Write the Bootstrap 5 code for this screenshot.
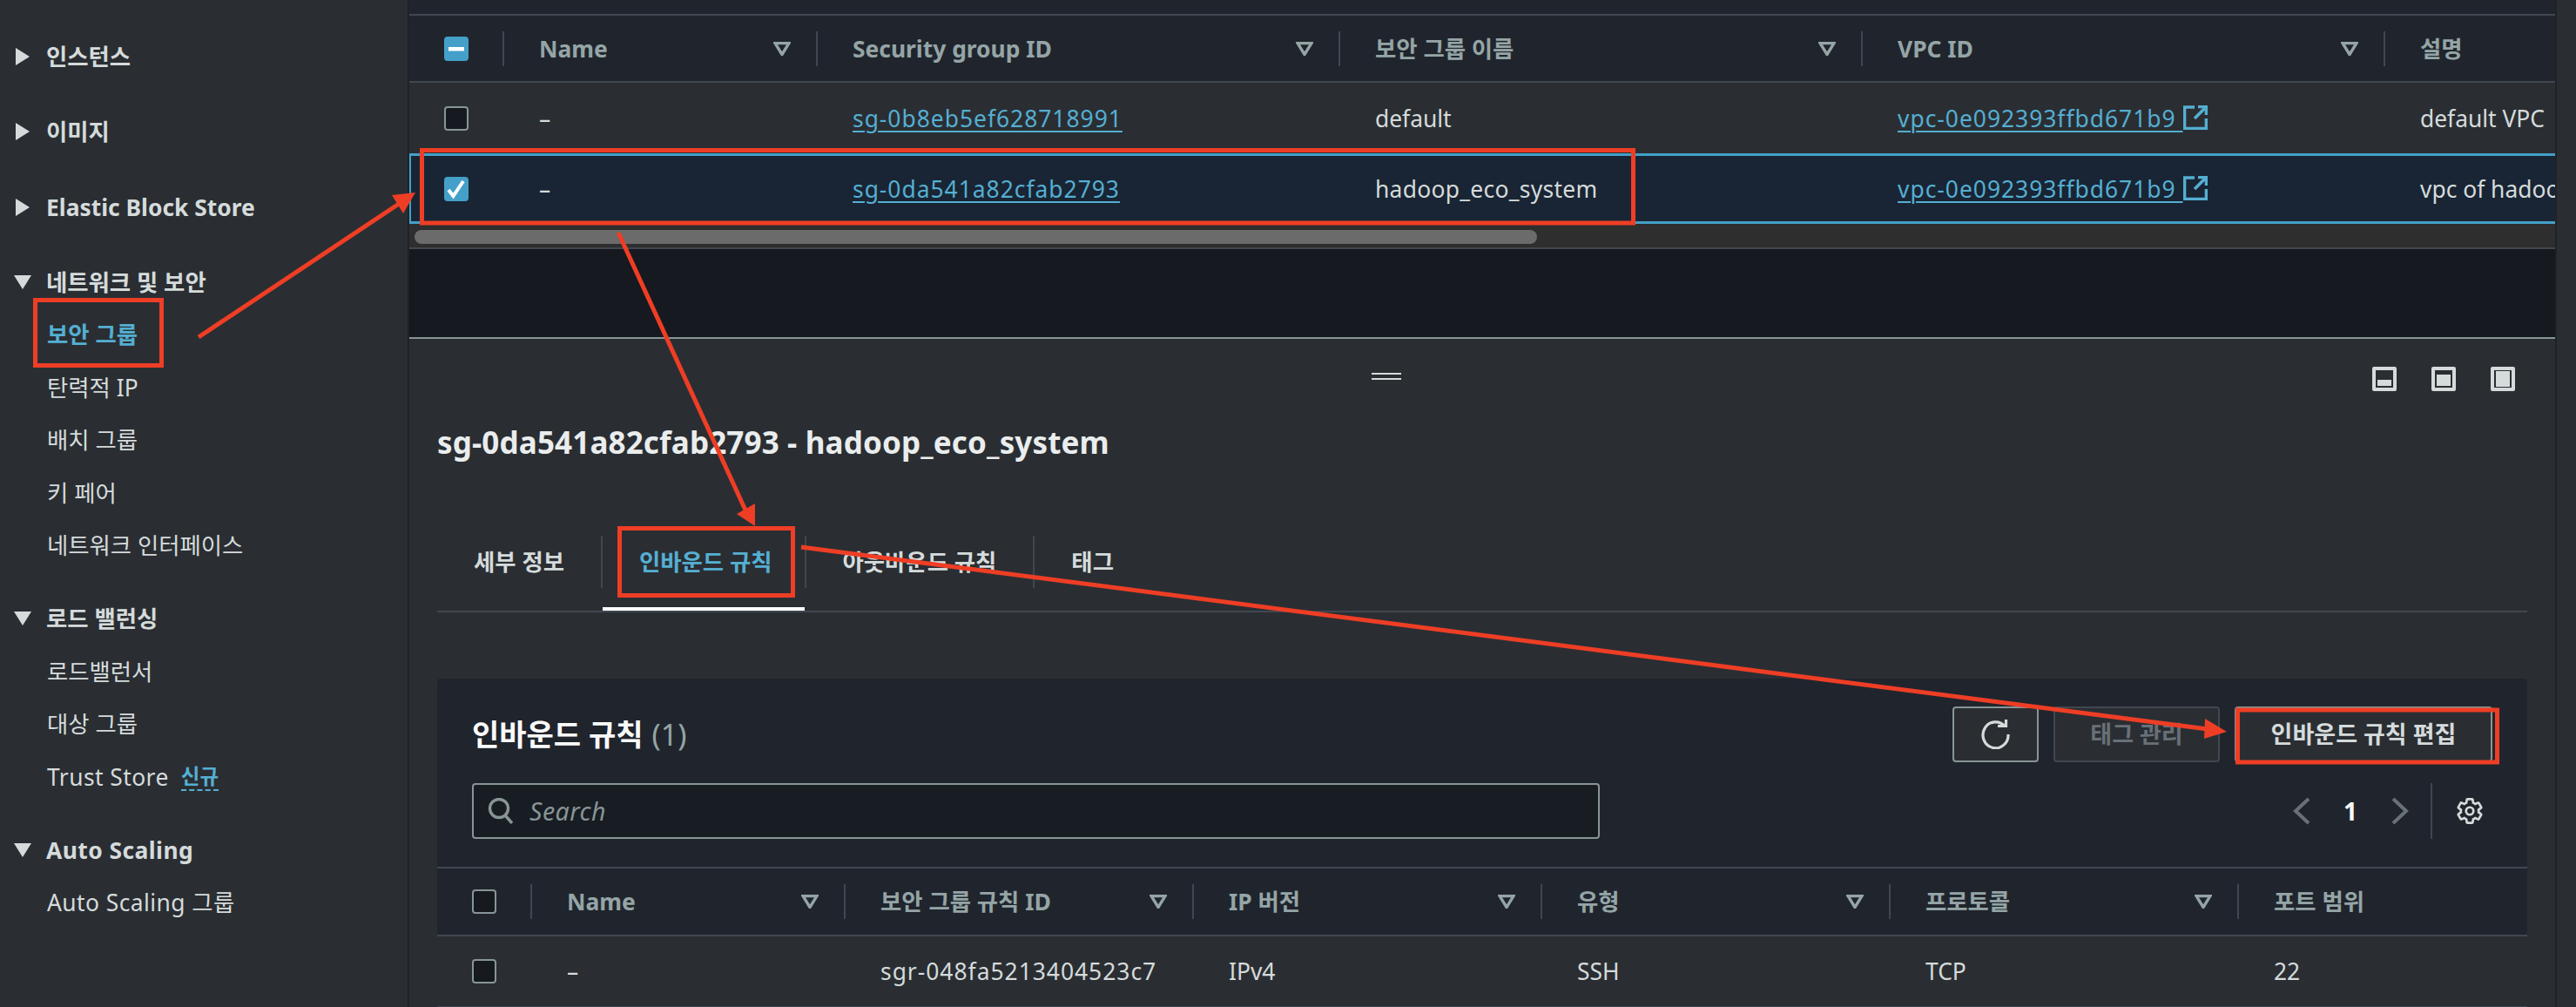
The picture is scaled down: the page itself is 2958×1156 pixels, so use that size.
<!DOCTYPE html>
<html lang="ko">
<head>
<meta charset="UTF-8">
<title>보안 그룹</title>
<link rel="stylesheet" href="https://cdn.jsdelivr.net/npm/bootstrap@5.3.3/dist/css/bootstrap.min.css">
<style>
  body { width: 2958px; height: 1156px; overflow: hidden; background: #2a2e33; color: #d5dbdb;
    font-family: "Noto Sans", "Noto Sans CJK KR", sans-serif; font-size: 26.4px; line-height: 36px; }

  /* left nav */
  .side-nav { width: 470px; height: 1156px; flex: none; padding-top: 35px; border-right: 2px solid #1f2329; }
  .side-head { height: 60px; margin-bottom: 26.3px; padding-left: 16px; font-weight: 700; }
  .side-head.is-open { margin-bottom: 0; }
  .side-head svg { width: 20px; height: 20px; flex: none; margin-right: 17px; fill: #d5dbdb; }
  .side-group { margin-bottom: 24px; }
  .side-item { height: 60.5px; padding-left: 54px; }
  .side-item.is-current { color: #55afd2; font-weight: 700; }
  .wide-latin { letter-spacing: .45px; }
  .new-tag { margin-left: 14px; color: #55afd2; font-size: 23.5px; font-weight: 700; line-height: 30px; letter-spacing: 0; border-bottom: 2px dashed #55afd2; }

  /* main */
  .main-col { width: 2464px; flex: none; }
  .tools-strip { flex: 1; border-left: 2px solid #1f2329; }
  .top-strip { height: 16px; background: #20252d; }

  .aws-tbl-wrap { overflow: hidden; }
  table.aws-tbl { table-layout: fixed; border-collapse: separate; border-spacing: 0; margin: 0; color: #d5dbdb; }
  table.aws-tbl th { height: 79px; padding: 0; background: #20252d; color: #95a5a6; font-weight: 700;
    border-top: 2px solid #414750; border-bottom: 2px solid #414750; vertical-align: middle; }
  table.aws-tbl td { height: 81px; padding: 0 0 0 42px; background: #2a2e33; color: #d5dbdb; border: 0; vertical-align: middle; white-space: nowrap; overflow: hidden; }
  table.aws-tbl td.chk-cell { padding-left: 40px; }
  table.aws-tbl th.chk-cell { padding-left: 40px; }
  table.aws-tbl tr.is-picked td { background: #192534; border-top: 3px solid #44a0c8; border-bottom: 3px solid #44a0c8; }
  table.aws-tbl tr.is-picked td:first-child { border-left: 2px solid #44a0c8; padding-left: 38px; }
  table.rules-tbl th { height: 80px; }
  table.rules-tbl td { height: 82px; border-bottom: 2px solid #414750; }
  .th-in { height: 40px; padding: 0 29px 0 40px; border-left: 2px solid #414750; }
  .th-in svg { width: 20px; height: 16px; fill: none; stroke: #95a5a6; stroke-width: 3.4; }
  .id-text { letter-spacing: 1px; }
  .name-text { letter-spacing: .3px; }
  .cell-link { color: #55afd2; text-decoration: underline; text-decoration-thickness: 2px; text-underline-offset: 4px; }
  .ext-icon { width: 28px; height: 28px; margin-left: 1px; vertical-align: -3px; fill: none; stroke: #55afd2; stroke-width: 3.6; }

  .chk-box { display: block; width: 28px; height: 28px; border-radius: 4px; background: #16191f; border: 2px solid #879596; }
  .chk-box.is-on { background: #44a0c8; border-color: #44a0c8; }
  .chk-box svg { display: block; width: 24px; height: 24px; }

  .scroll-track { height: 27px; padding: 7px 0 4px 6px; background: #2e2e2e; }
  .scroll-thumb { width: 1289px; height: 16px; border-radius: 8px; background: #6b6b6b; }
  .hr-line { height: 2px; background: #414750; }
  .dark-band { height: 101px; background: #16191f; }

  /* split panel */
  .split-panel { padding: 32px 32px 0; border-top: 2px solid #879596; position: relative; }
  .drag-bar { position: absolute; top: 39px; left: 1105px; width: 34px; height: 8px; border-top: 2px solid #d5dbdb; border-bottom: 2px solid #d5dbdb; }
  .panel-icons { height: 28px; gap: 40px; padding-right: 14px; }
  .panel-icons svg { width: 28px; height: 28px; fill: #d5dbdb; }
  .panel-title { margin: 37px 0 0; font-size: 35px; line-height: 44px; font-weight: 700; letter-spacing: .15px; color: #eaeded; }

  .tab-row { margin-top: 70px; height: 103px; border-bottom: 2px solid #414750; flex-wrap: nowrap; }
  .tab-row .nav-link { height: 101px; padding: 15px 42px 0 42px; color: #d5dbdb; font-weight: 700; line-height: 60px; margin-right: 0; }
  .tab-row .is-active .nav-link { padding-right: 37px; color: #55afd2; border-bottom: 4px solid #fff; }
  .tab-sep { width: 2px; height: 60px; margin-top: 15px; background: #414750; }

  /* rules card */
  .rules-box { margin-top: 76px; height: 400px; background: #20252d; border-radius: 4px 4px 0 0; }
  .rules-top { padding: 32px 40px; }
  .rules-title { margin: 0; font-size: 34px; line-height: 64px; font-weight: 700; color: #fafafa; }
  .rules-title span { margin-left: 10px; color: #95a5a6; font-weight: 400; }
  .btn-aws { width: 296px; height: 64px; padding: 0; background: #2a2e33; border: 2px solid #879596; border-radius: 4px; color: #d5dbdb; font-size: 27px; font-weight: 700; }
  .btn-aws.btn-square { width: 99px; }
  .btn-aws:disabled { opacity: 1; background: #2a2e33; border-color: #414750; color: #687078; width: 191px; }
  .rules-btns { gap: 17px; }
  .search-box { width: 1295px; height: 64px; margin-top: 24px; padding-left: 16px; background: #181c23; border: 2px solid #879596; border-radius: 4px; color: #879596; font-size: 28.5px; font-style: italic; letter-spacing: .5px; }
  .search-box svg { width: 30px; height: 30px; margin-right: 18px; fill: none; stroke: #879596; stroke-width: 3.4; }
  .pager { margin-top: 24px; height: 64px; }
  .pager-num { margin: 0 39px 0 38px; color: #fafafa; font-size: 28px; font-weight: 700; }
  .pager svg.chev { width: 20px; height: 32px; fill: none; stroke: #687078; stroke-width: 4; }
  .pager-sep { width: 2px; height: 64px; margin: 0 26px 0 25px; background: #414750; }
  .gear-icon { width: 34px; height: 34px; margin-right: 9px; fill: none; stroke: #d5dbdb; stroke-width: 1.9; }

  /* screenshot markup on top of everything */
  .markup { position: absolute; top: 0; left: 0; pointer-events: none; }
</style>
</head>
<body class="d-flex">

<svg width="0" height="0" class="d-block position-absolute">
  <symbol id="tri-open" viewBox="0 0 20 16"><polygon points="2,1.6 18,1.6 10,14.5"/></symbol>
  <symbol id="ext" viewBox="0 0 28 28"><path d="M13 2H1.5v24.5h25V15M17 1.5h9.5V11M26 2 13 15"/></symbol>
  <symbol id="minus" viewBox="0 0 24 24"><rect x="3" y="10" width="18" height="4.5" fill="#fff"/></symbol>
  <symbol id="tick" viewBox="0 0 24 24"><path d="M3 13l5.5 7L20 3" fill="none" stroke="#fff" stroke-width="4"/></symbol>
  <symbol id="right" viewBox="0 0 20 20"><polygon points="2,0 18,10 2,20"/></symbol>
  <symbol id="down" viewBox="0 0 20 20"><polygon points="0,2 20,2 10,18"/></symbol>
</svg>

<!-- left nav -->
<nav class="side-nav">
  <div class="side-head d-flex align-items-center"><svg><use href="#right"/></svg>인스턴스</div>
  <div class="side-head d-flex align-items-center"><svg><use href="#right"/></svg>이미지</div>
  <div class="side-head d-flex align-items-center"><svg><use href="#right"/></svg>Elastic Block Store</div>

  <div class="side-group">
    <div class="side-head is-open d-flex align-items-center"><svg><use href="#down"/></svg>네트워크 및 보안</div>
    <div class="side-item is-current d-flex align-items-center">보안 그룹</div>
    <div class="side-item d-flex align-items-center">탄력적 IP</div>
    <div class="side-item d-flex align-items-center">배치 그룹</div>
    <div class="side-item d-flex align-items-center">키 페어</div>
    <div class="side-item d-flex align-items-center">네트워크 인터페이스</div>
  </div>
  <div class="side-group">
    <div class="side-head is-open d-flex align-items-center"><svg><use href="#down"/></svg>로드 밸런싱</div>
    <div class="side-item d-flex align-items-center">로드밸런서</div>
    <div class="side-item d-flex align-items-center">대상 그룹</div>
    <div class="side-item wide-latin d-flex align-items-center">Trust Store <span class="new-tag">신규</span></div>
  </div>
  <div class="side-group">
    <div class="side-head is-open wide-latin d-flex align-items-center"><svg><use href="#down"/></svg>Auto Scaling</div>
    <div class="side-item wide-latin d-flex align-items-center">Auto Scaling 그룹</div>
  </div>
</nav>

<main class="main-col">
  <div class="top-strip"></div>

  <div class="aws-tbl-wrap">
    <table class="aws-tbl" style="width:2667px">
      <colgroup><col style="width:107px"><col style="width:360px"><col style="width:600px"><col style="width:600px"><col style="width:600px"><col style="width:400px"></colgroup>
      <thead><tr>
        <th class="chk-cell"><span class="chk-box is-on"><svg><use href="#minus"/></svg></span></th>
        <th><div class="th-in d-flex align-items-center justify-content-between">Name<svg><use href="#tri-open"/></svg></div></th>
        <th><div class="th-in d-flex align-items-center justify-content-between">Security group ID<svg><use href="#tri-open"/></svg></div></th>
        <th><div class="th-in d-flex align-items-center justify-content-between">보안 그룹 이름<svg><use href="#tri-open"/></svg></div></th>
        <th><div class="th-in d-flex align-items-center justify-content-between">VPC ID<svg><use href="#tri-open"/></svg></div></th>
        <th><div class="th-in d-flex align-items-center justify-content-between">설명</div></th>
      </tr></thead>
      <tbody>
        <tr>
          <td class="chk-cell"><span class="chk-box"></span></td>
          <td>–</td>
          <td><a class="cell-link id-text" href="#">sg-0b8eb5ef628718991</a></td>
          <td>default</td>
          <td><a class="cell-link id-text" href="#">vpc-0e092393ffbd671b9 <svg class="ext-icon"><use href="#ext"/></svg></a></td>
          <td>default VPC</td>
        </tr>
        <tr class="is-picked">
          <td class="chk-cell"><span class="chk-box is-on"><svg><use href="#tick"/></svg></span></td>
          <td>–</td>
          <td><a class="cell-link id-text" href="#">sg-0da541a82cfab2793</a></td>
          <td class="name-text">hadoop_eco_system</td>
          <td><a class="cell-link id-text" href="#">vpc-0e092393ffbd671b9 <svg class="ext-icon"><use href="#ext"/></svg></a></td>
          <td>vpc of hadoop</td>
        </tr>
      </tbody>
    </table>
  </div>
  <div class="scroll-track"><div class="scroll-thumb"></div></div>
  <div class="hr-line"></div>
  <div class="dark-band"></div>

  <section class="split-panel">
    <div class="drag-bar"></div>
    <div class="panel-icons d-flex justify-content-end">
      <svg viewBox="0 0 28 28"><path fill-rule="evenodd" d="M2 0h24a2 2 0 0 1 2 2v24a2 2 0 0 1-2 2H2a2 2 0 0 1-2-2V2a2 2 0 0 1 2-2zM4 4v20h20V4zM6 15h16v7H6z"/></svg>
      <svg viewBox="0 0 28 28"><path fill-rule="evenodd" d="M2 0h24a2 2 0 0 1 2 2v24a2 2 0 0 1-2 2H2a2 2 0 0 1-2-2V2a2 2 0 0 1 2-2zM4 4v20h20V4zM6 9h16v13H6z"/></svg>
      <svg viewBox="0 0 28 28"><path fill-rule="evenodd" d="M2 0h24a2 2 0 0 1 2 2v24a2 2 0 0 1-2 2H2a2 2 0 0 1-2-2V2a2 2 0 0 1 2-2zM4 4v20h20V4zM6 5h16v18H6z"/></svg>
    </div>

    <h2 class="panel-title">sg-0da541a82cfab2793 - hadoop_eco_system</h2>

    <ul class="nav tab-row">
      <li class="nav-item"><a class="nav-link" href="#">세부 정보</a></li>
      <li class="tab-sep"></li>
      <li class="nav-item is-active"><a class="nav-link" href="#">인바운드 규칙</a></li>
      <li class="tab-sep"></li>
      <li class="nav-item"><a class="nav-link" href="#">아웃바운드 규칙</a></li>
      <li class="tab-sep"></li>
      <li class="nav-item"><a class="nav-link" href="#">태그</a></li>
    </ul>

    <div class="rules-box">
      <div class="rules-top d-flex justify-content-between">
        <div>
          <h3 class="rules-title">인바운드 규칙<span>(1)</span></h3>
          <div class="search-box d-flex align-items-center">
            <svg viewBox="0 0 30 30"><circle cx="13" cy="12" r="10.5"/><path d="M20 20l8 9"/></svg>Search
          </div>
        </div>
        <div class="d-flex flex-column align-items-end">
          <div class="rules-btns d-flex">
            <button class="btn btn-aws btn-square d-flex align-items-center justify-content-center" type="button">
              <svg width="34" height="34" viewBox="0 0 34 34" fill="none" stroke="#d5dbdb" stroke-width="3.2"><path d="M27.5 8A14.5 15 0 1 0 31 17"/><path d="M19 7.5h9.5V-1"/></svg>
            </button>
            <button class="btn btn-aws" type="button" disabled>태그 관리</button>
            <button class="btn btn-aws" type="button">인바운드 규칙 편집</button>
          </div>
          <div class="pager d-flex align-items-center">
            <svg class="chev" viewBox="0 0 20 32"><path d="M18 2 3 16l15 14"/></svg>
            <span class="pager-num">1</span>
            <svg class="chev" viewBox="0 0 20 32"><path d="M2 2l15 14L2 30"/></svg>
            <span class="pager-sep"></span>
            <svg class="gear-icon" viewBox="0 0 24 24"><path d="M19.14 12.94c.04-.3.06-.61.06-.94 0-.32-.02-.64-.07-.94l2.03-1.58c.18-.14.23-.41.12-.61l-1.92-3.32c-.12-.22-.37-.29-.59-.22l-2.39.96c-.5-.38-1.03-.7-1.62-.94l-.36-2.54c-.04-.24-.24-.41-.48-.41h-3.84c-.24 0-.43.17-.47.41l-.36 2.54c-.59.24-1.13.57-1.62.94l-2.39-.96c-.22-.08-.47 0-.59.22L2.74 8.87c-.12.21-.08.47.12.61l2.03 1.58c-.05.3-.09.63-.09.94s.02.64.07.94l-2.03 1.58c-.18.14-.23.41-.12.61l1.92 3.32c.12.22.37.29.59.22l2.39-.96c.5.38 1.03.7 1.62.94l.36 2.54c.05.24.24.41.48.41h3.84c.24 0 .44-.17.47-.41l.36-2.54c.59-.24 1.13-.56 1.62-.94l2.39.96c.22.08.47 0 .59-.22l1.92-3.32c.12-.22.07-.47-.12-.61l-2.01-1.58z"/><circle cx="12" cy="12" r="3"/></svg>
          </div>
        </div>
      </div>

      <table class="aws-tbl rules-tbl" style="width:2400px">
        <colgroup><col style="width:107px"><col style="width:360px"><col style="width:400px"><col style="width:400px"><col style="width:400px"><col style="width:400px"><col style="width:333px"></colgroup>
        <thead><tr>
          <th class="chk-cell"><span class="chk-box"></span></th>
          <th><div class="th-in d-flex align-items-center justify-content-between">Name<svg><use href="#tri-open"/></svg></div></th>
          <th><div class="th-in d-flex align-items-center justify-content-between">보안 그룹 규칙 ID<svg><use href="#tri-open"/></svg></div></th>
          <th><div class="th-in d-flex align-items-center justify-content-between">IP 버전<svg><use href="#tri-open"/></svg></div></th>
          <th><div class="th-in d-flex align-items-center justify-content-between">유형<svg><use href="#tri-open"/></svg></div></th>
          <th><div class="th-in d-flex align-items-center justify-content-between">프로토콜<svg><use href="#tri-open"/></svg></div></th>
          <th><div class="th-in d-flex align-items-center justify-content-between">포트 범위</div></th>
        </tr></thead>
        <tbody><tr>
          <td class="chk-cell"><span class="chk-box"></span></td>
          <td>–</td>
          <td class="id-text">sgr-048fa5213404523c7</td>
          <td>IPv4</td>
          <td>SSH</td>
          <td>TCP</td>
          <td>22</td>
        </tr></tbody>
      </table>
    </div>
  </section>
</main>
<div class="tools-strip"></div>

<!-- red markup boxes and arrows -->
<svg class="markup" width="2958" height="1156" viewBox="0 0 2958 1156" fill="none" stroke="#ee3e25" stroke-width="5">
  <rect x="40.500" y="344.500" width="145" height="75"/>
  <rect x="484.500" y="172.500" width="1391" height="83.500"/>
  <rect x="711.500" y="606.500" width="199" height="77"/>
  <rect x="2569.500" y="815" width="298" height="60"/>
  <path d="M228 387 458 234"/>
  <path d="M710 267 858 590"/>
  <path d="M920 628 2535 837"/>
  <g fill="#ee3e25" stroke="none">
    <polygon points="477,221 450,224 463,245"/>
    <polygon points="867,604 846,590 867,578"/>
    <polygon points="2557,840 2532,825 2531,848"/>
  </g>
</svg>

<script src="https://cdn.jsdelivr.net/npm/bootstrap@5.3.3/dist/js/bootstrap.bundle.min.js"></script>
</body>
</html>
